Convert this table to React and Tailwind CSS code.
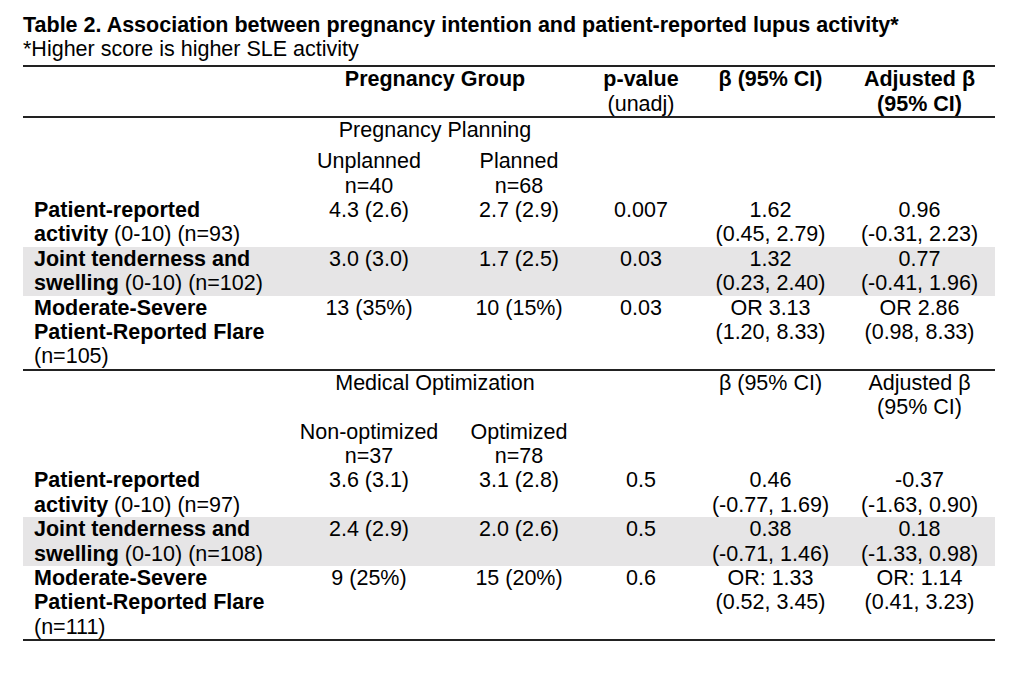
import React from "react";

const grid = "grid grid-cols-[262px_168px_132px_112px_147px_151px]";

function DataRow({ label, a, b, p, beta, adj, shaded }) {
  return (
    <div className={`${grid} ${shaded ? "bg-[#e6e5e6]" : ""}`}>
      <div className="pl-[11px] text-left whitespace-nowrap">{label}</div>
      <div className="text-center whitespace-nowrap">{a}</div>
      <div className="text-center whitespace-nowrap">{b}</div>
      <div className="text-center whitespace-nowrap">{p}</div>
      <div className="text-center whitespace-nowrap">{beta}</div>
      <div className="text-center whitespace-nowrap">{adj}</div>
    </div>
  );
}

function TwoLine({ top, bottom }) {
  return (
    <>
      {top}
      <br />
      {bottom}
    </>
  );
}

export default function App() {
  return (
    <div className="w-[1024px] h-[686px] bg-white text-black font-['Liberation_Sans',Arial,sans-serif] text-[21.5px] leading-[24.4px] pt-[12.5px] pl-[23px] overflow-hidden">
      <div className="font-bold whitespace-nowrap">
        Table 2. Association between pregnancy intention and patient-reported lupus activity*
      </div>
      <div className="whitespace-nowrap">*Higher score is higher SLE activity</div>

      <div className="w-[972px] mt-[3.5px] border-t-2 border-b-2 border-[#222]">
        {/* Header */}
        <div className={`${grid} pt-[0.5px] border-b-2 border-[#222]`}>
          <div></div>
          <div className="col-span-2 text-center font-bold">Pregnancy Group</div>
          <div className="text-center">
            <span className="font-bold">p-value</span>
            <br />
            (unadj)
          </div>
          <div className="text-center font-bold">β (95% CI)</div>
          <div className="text-center font-bold whitespace-nowrap">
            Adjusted β
            <br />
            (95% CI)
          </div>
        </div>

        {/* Section 1 */}
        <div className={`${grid} pb-[6.6px]`}>
          <div></div>
          <div className="col-span-2 text-center">Pregnancy Planning</div>
        </div>
        <div className={grid}>
          <div></div>
          <div className="text-center">
            Unplanned
            <br />
            n=40
          </div>
          <div className="text-center">
            Planned
            <br />
            n=68
          </div>
        </div>
        <DataRow
          label={
            <>
              <b>Patient-reported</b>
              <br />
              <b>activity</b> (0-10) (n=93)
            </>
          }
          a="4.3 (2.6)"
          b="2.7 (2.9)"
          p="0.007"
          beta={<TwoLine top="1.62" bottom="(0.45, 2.79)" />}
          adj={<TwoLine top="0.96" bottom="(-0.31, 2.23)" />}
        />
        <DataRow
          shaded
          label={
            <>
              <b>Joint tenderness and</b>
              <br />
              <b>swelling</b> (0-10) (n=102)
            </>
          }
          a="3.0 (3.0)"
          b="1.7 (2.5)"
          p="0.03"
          beta={<TwoLine top="1.32" bottom="(0.23, 2.40)" />}
          adj={<TwoLine top="0.77" bottom="(-0.41, 1.96)" />}
        />
        <DataRow
          label={
            <>
              <b>Moderate-Severe</b>
              <br />
              <b>Patient-Reported Flare</b>
              <br />
              (n=105)
            </>
          }
          a="13 (35%)"
          b="10 (15%)"
          p="0.03"
          beta={<TwoLine top="OR 3.13" bottom="(1.20, 8.33)" />}
          adj={<TwoLine top="OR 2.86" bottom="(0.98, 8.33)" />}
        />

        {/* Section 2 */}
        <div className={`${grid} border-t-2 border-[#222]`}>
          <div></div>
          <div className="col-span-2 text-center">Medical Optimization</div>
          <div></div>
          <div className="text-center">β (95% CI)</div>
          <div className="text-center whitespace-nowrap">
            Adjusted β
            <br />
            (95% CI)
          </div>
        </div>
        <div className={grid}>
          <div></div>
          <div className="text-center">
            Non-optimized
            <br />
            n=37
          </div>
          <div className="text-center">
            Optimized
            <br />
            n=78
          </div>
        </div>
        <DataRow
          label={
            <>
              <b>Patient-reported</b>
              <br />
              <b>activity</b> (0-10) (n=97)
            </>
          }
          a="3.6 (3.1)"
          b="3.1 (2.8)"
          p="0.5"
          beta={<TwoLine top="0.46" bottom="(-0.77, 1.69)" />}
          adj={<TwoLine top="-0.37" bottom="(-1.63, 0.90)" />}
        />
        <DataRow
          shaded
          label={
            <>
              <b>Joint tenderness and</b>
              <br />
              <b>swelling</b> (0-10) (n=108)
            </>
          }
          a="2.4 (2.9)"
          b="2.0 (2.6)"
          p="0.5"
          beta={<TwoLine top="0.38" bottom="(-0.71, 1.46)" />}
          adj={<TwoLine top="0.18" bottom="(-1.33, 0.98)" />}
        />
        <DataRow
          label={
            <>
              <b>Moderate-Severe</b>
              <br />
              <b>Patient-Reported Flare</b>
              <br />
              (n=111)
            </>
          }
          a="9 (25%)"
          b="15 (20%)"
          p="0.6"
          beta={<TwoLine top="OR: 1.33" bottom="(0.52, 3.45)" />}
          adj={<TwoLine top="OR: 1.14" bottom="(0.41, 3.23)" />}
        />
      </div>
    </div>
  );
}
